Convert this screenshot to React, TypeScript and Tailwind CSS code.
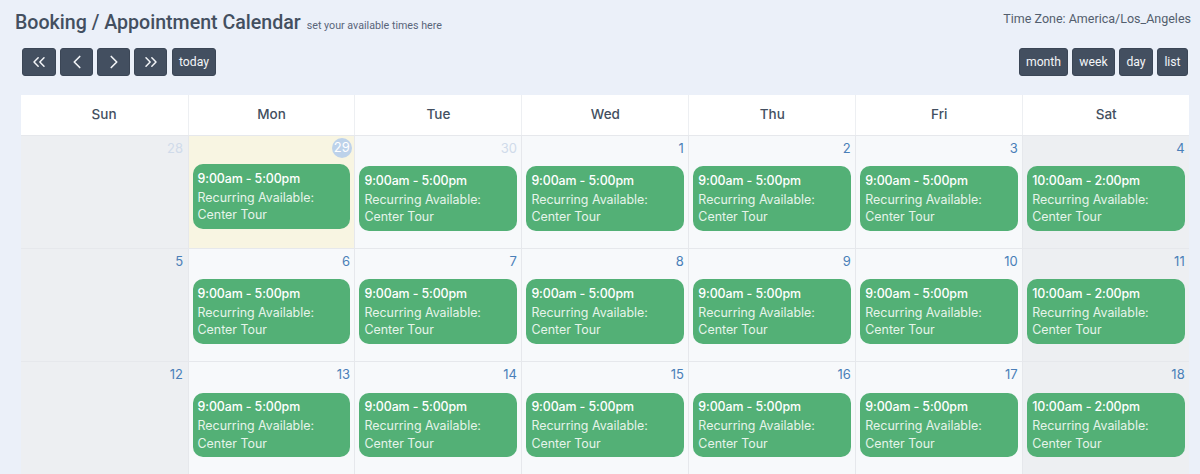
import { ChevronLeft, ChevronRight, ChevronsLeft, ChevronsRight } from 'lucide-react';

const days = ['Sun', 'Mon', 'Tue', 'Wed', 'Thu', 'Fri', 'Sat'];

const weeks = [
    ['28', '29', '30', '1', '2', '3', '4'],
    ['5', '6', '7', '8', '9', '10', '11'],
    ['12', '13', '14', '15', '16', '17', '18'],
];

const btn = 'h-[28px] flex items-center justify-center rounded-[3px] bg-[#434f60] border border-[#3b4656] text-[#f3f5f8] text-[12.2px]';

function CalEvent({ time }: { time: string }) {
    return (
        <div className="h-[64.5px] rounded-[10px] bg-[#53b076] px-[5px] pt-[4.5px] text-white font-['Inter',sans-serif]">
            <div className="text-[12.4px] leading-[20px] font-medium tracking-[-0.1px] whitespace-nowrap">{time}</div>
            <div className="text-[12.4px] leading-[17.5px] text-[#e6f4ea] whitespace-nowrap">Recurring Available:</div>
            <div className="text-[12.4px] leading-[17.5px] text-[#e6f4ea] whitespace-nowrap">Center Tour</div>
        </div>
    );
}

function DayCell({ label, col, row }: { label: string; col: number; row: number }) {
    const isSun = col === 0;
    const isSat = col === 6;
    const isToday = row === 0 && col === 1;
    const isOther = row === 0 && col < 3;
    const bg = isToday ? 'bg-[#f8f5e2]' : isSun || isSat ? 'bg-[#edeff2]' : 'bg-[#f7f9fb]';
    return (
        <div className={`h-[113.4px] border-t border-[#e6e8ec] ${col > 0 ? 'border-l' : ''} ${bg} pl-[4px] pr-[4.5px]`}>
            <div className={`flex justify-end items-start pt-[2px] ${isToday ? 'h-[28.5px]' : 'h-[30.6px]'}`}>
                {isToday ? (
                    <span className="w-[20.4px] h-[20.4px] -mr-[2px] rounded-full bg-[#bdd2ea] flex items-center justify-center text-[13px] text-white">{label}</span>
                ) : (
                    <span className={`text-[13px] leading-[20px] ${isOther ? 'text-[#d0dbea]' : 'text-[#4a7fb8]'}`}>{label}</span>
                )}
            </div>
            {!isSun && <CalEvent time={isSat ? '10:00am - 2:00pm' : '9:00am - 5:00pm'} />}
        </div>
    );
}

export default function App() {
    return (
        <div className="w-[1200px] h-[474px] overflow-hidden bg-[#ebf0f9] font-['Roboto',sans-serif] text-[#434f60]">
            <div className="flex justify-between pl-[15px] pr-[9px] h-[48px]">
                <div className="flex items-baseline gap-[6px] pt-[8px]">
                    <h1 className="text-[19.6px] leading-[30px] font-medium">Booking / Appointment Calendar</h1>
                    <span className="text-[10.7px] text-[#59657a]">set your available times here</span>
                </div>
                <div className="pt-[9px] text-[12.5px] leading-[20px] text-[#535e6e]">Time Zone: America/Los_Angeles</div>
            </div>

            <div className="flex justify-between pl-[22px] pr-[12px] h-[46.5px]">
                <div className="flex gap-[4px]">
                    <button className={`${btn} w-[34px]`}><ChevronsLeft className="w-[20px] h-[20px]" strokeWidth={1.8} /></button>
                    <button className={`${btn} w-[33px]`}><ChevronLeft className="w-[22px] h-[22px]" strokeWidth={1.8} /></button>
                    <button className={`${btn} w-[33px]`}><ChevronRight className="w-[22px] h-[22px]" strokeWidth={1.8} /></button>
                    <button className={`${btn} w-[33px]`}><ChevronsRight className="w-[20px] h-[20px]" strokeWidth={1.8} /></button>
                    <button className={`${btn} w-[44px] ml-[1px]`}>today</button>
                </div>
                <div className="flex gap-[4px]">
                    <button className={`${btn} w-[49px]`}>month</button>
                    <button className={`${btn} w-[43px]`}>week</button>
                    <button className={`${btn} w-[34px]`}>day</button>
                    <button className={`${btn} w-[31px]`}>list</button>
                </div>
            </div>

            <div className="ml-[20.6px] w-[1168.6px] font-['Inter',sans-serif]">
                <div className="grid grid-cols-7 h-[40px] bg-white">
                    {days.map((d, i) => (
                        <div key={d} className={`flex items-center justify-center pb-[1px] text-[13.5px] font-medium text-[#434f60] ${i > 0 ? 'border-l border-[#edeff2]' : ''}`}>{d}</div>
                    ))}
                </div>
                {weeks.map((week, row) => (
                    <div key={row} className="grid grid-cols-7">
                        {week.map((label, col) => (
                            <DayCell key={label} label={label} col={col} row={row} />
                        ))}
                    </div>
                ))}
            </div>
        </div>
    );
}
